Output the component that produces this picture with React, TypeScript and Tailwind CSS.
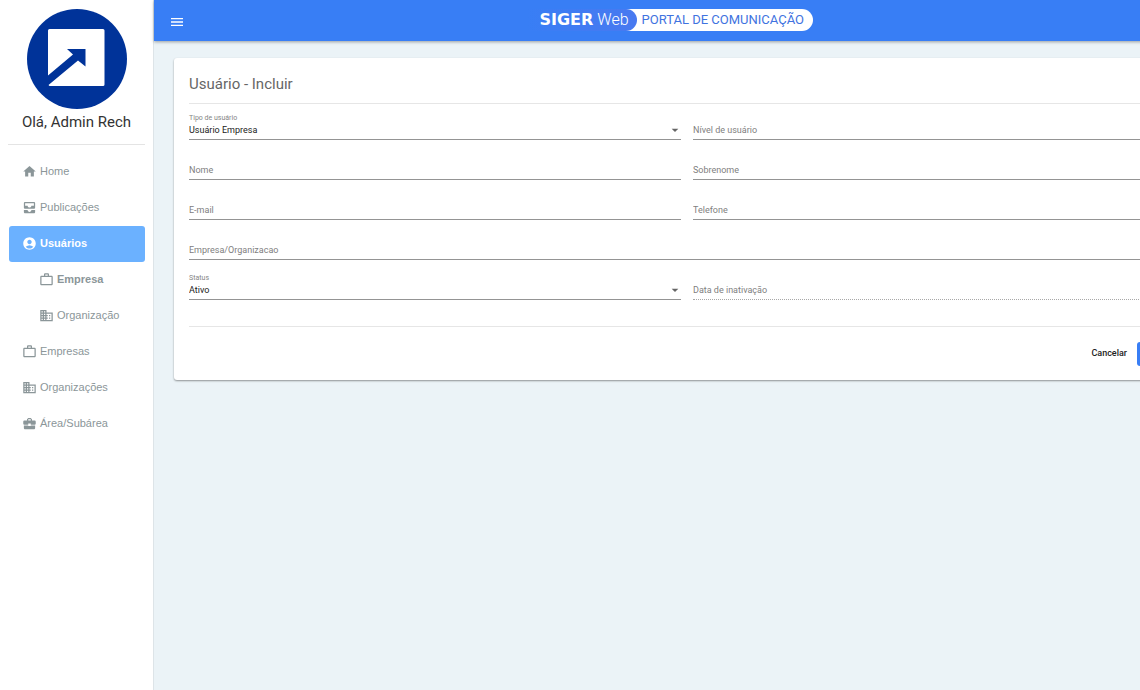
import React from "react";
import {
  MdAccountCircle,
  MdAllInbox,
  MdArrowDropDown,
  MdBusiness,
  MdBusinessCenter,
  MdHome,
  MdMenu,
  MdWorkOutline,
} from "react-icons/md";
import type { IconType } from "react-icons";

type NavItem = { label: string; icon: IconType; active?: boolean; child?: boolean; bold?: boolean };

const NAV: NavItem[] = [
  { label: "Home", icon: MdHome },
  { label: "Publicações", icon: MdAllInbox },
  { label: "Usuários", icon: MdAccountCircle, active: true, bold: true },
  { label: "Empresa", icon: MdWorkOutline, child: true, bold: true },
  { label: "Organização", icon: MdBusiness, child: true },
  { label: "Empresas", icon: MdWorkOutline },
  { label: "Organizações", icon: MdBusiness },
  { label: "Área/Subárea", icon: MdBusinessCenter },
];

function Sidebar() {
  return (
    <aside className="flex w-[154px] shrink-0 flex-col border-r border-[#dde4e8] bg-white px-2 pt-[9px]">
      <svg viewBox="0 0 100 100" className="ml-[19px] size-[100px]" role="img" aria-label="Rech">
        <circle cx="50" cy="50" r="50" fill="#003399" />
        <path
          fill="#fff"
          d="M22.500 20h53.500a1.500 1.500 0 0 1 1.500 1.500v54a1.500 1.500 0 0 1-1.500 1.500H22.500l-1-1L51 51.500l7.500 6V40H40l6 5.500L21 66.500V21.500a1.500 1.500 0 0 1 1.500-1.500z"
        />
      </svg>
      <p className="mt-1 text-center text-[15px] leading-[18px] text-[#333]">Olá, Admin Rech</p>
      <hr className="mt-[13px] border-[#e4e4e4]" />
      <nav className="mt-[9px] font-['Liberation_Sans',Arial,sans-serif] text-[11px]">
        <ul>
          {NAV.map(({ label, icon: Icon, active, child, bold }) => (
            <li key={label}>
              <a
                href="#"
                className={`ml-px flex h-9 items-center gap-[3px] rounded-[3px] pb-px ${child ? "pl-[30px]" : "pl-[13px]"} ${
                  active ? "bg-[#6bb1ff] text-white" : "text-[#8b9699]"
                } ${bold ? "font-bold" : ""}`}
              >
                <Icon className="size-[15px] shrink-0" aria-hidden="true" />
                {label}
              </a>
            </li>
          ))}
        </ul>
      </nav>
    </aside>
  );
}

function Header() {
  return (
    <header className="relative z-10 flex h-[41px] items-center bg-[#387ef5] pl-[15px] shadow-[0_1px_3px_rgba(0,0,0,0.35)]">
      <button type="button" aria-label="Menu" className="mt-0.5 text-white">
        <MdMenu className="size-4" />
      </button>
      <div className="mr-[407px] mb-px ml-auto flex h-[22px] items-center rounded-full bg-white text-[#3f73e0]">
        <span className="flex h-full w-[109px] items-center justify-end gap-1 rounded-r-full bg-[#387ef5] bg-linear-to-r from-[#387ef5] to-[#4879f0] pr-2 leading-5 text-white">
          <strong className="font-['DejaVu_Sans',sans-serif] text-base leading-5 font-bold">SIGER</strong>
          <span className="text-base leading-5 font-light">Web</span>
        </span>
        <span className="pr-[9px] pl-[5px] text-[13px]">PORTAL DE COMUNICAÇÃO</span>
      </div>
    </header>
  );
}

type FieldProps = { id: string; label: string; wide?: boolean; disabled?: boolean };

function TextField({ id, label, wide, disabled }: FieldProps) {
  return (
    <div
      className={`flex h-[26px] items-end border-b ${wide ? "col-span-2" : ""} ${
        disabled ? "border-dotted border-[#a8a8a8]" : "border-[#949494]"
      }`}
    >
      <input
        id={id}
        aria-label={label}
        disabled={disabled}
        placeholder={label}
        className="h-[18px] w-full bg-transparent leading-4 outline-none placeholder:text-[#808080]"
      />
    </div>
  );
}

function SelectField({ id, label, value }: { id: string; label: string; value?: string }) {
  return (
    <div className="relative flex h-[26px] flex-col border-b border-[#949494]">
      {value && (
        <label htmlFor={id} className="h-2 text-[7px] leading-2 text-[#858585]">
          {label}
        </label>
      )}
      <select
        id={id}
        aria-label={label}
        className={`h-4 w-full appearance-none bg-transparent leading-4 outline-none ${
          value ? "text-[#222]" : "mt-2 text-[#808080]"
        }`}
      >
        <option>{value ?? label}</option>
      </select>
      <MdArrowDropDown className="pointer-events-none absolute right-[-2px] bottom-px size-4 text-[#666]" aria-hidden="true" />
    </div>
  );
}

export default function App() {
  return (
    <div className="flex min-h-screen overflow-hidden bg-[#ebf3f7] font-['Roboto',sans-serif]">
      <Sidebar />
      <div className="min-w-[1066px] flex-1">
        <Header />
        <main className="px-5 pt-[17px]">
          <section className="rounded-[3px] bg-white px-[15px] pt-4 pb-[14px] shadow-[0_1px_2px_rgba(0,0,0,0.4)]">
            <h1 className="text-[15px] leading-5 text-[#666]">Usuário - Incluir</h1>
            <form>
              <div className="mt-[9px] grid grid-cols-2 gap-x-3 gap-y-[14px] border-y border-[#e6e6e6] pt-[10px] pb-[26px] text-[9px]">
                <SelectField id="tipo" label="Tipo de usuário" value="Usuário Empresa" />
                <SelectField id="nivel" label="Nível de usuário" />
                <TextField id="nome" label="Nome" />
                <TextField id="sobrenome" label="Sobrenome" />
                <TextField id="email" label="E-mail" />
                <TextField id="telefone" label="Telefone" />
                <TextField id="empresa" label="Empresa/Organizacao" wide />
                <SelectField id="status" label="Status" value="Ativo" />
                <TextField id="inativacao" label="Data de inativação" disabled />
              </div>
              <div className="mt-[15px] flex justify-end text-[9px] font-medium">
                <button type="button" className="h-6 px-2.5 text-[#222]">
                  Cancelar
                </button>
                <button type="submit" className="h-6 w-12 rounded-[3px] bg-[#387ef5] text-white">
                  Salvar
                </button>
              </div>
            </form>
          </section>
        </main>
      </div>
    </div>
  );
}
